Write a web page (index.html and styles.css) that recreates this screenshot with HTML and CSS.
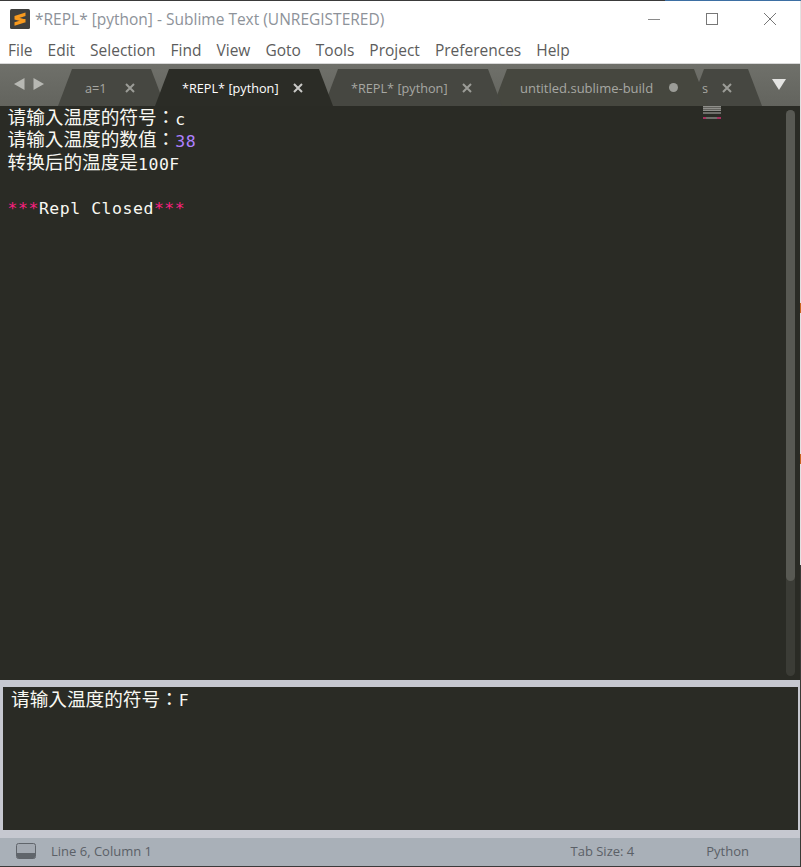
FILE: index.html
```html
<!DOCTYPE html>
<html lang="zh-TW">
<head>
<meta charset="utf-8">
<title>*REPL* [python] - Sublime Text (UNREGISTERED)</title>
<link rel="stylesheet" href="styles.css">
</head>
<body>
<div class="app">
  <div class="desk"><div class="desk-a"></div><div class="desk-b"></div></div>
  <div class="main">
    <header class="titlebar">
      <svg class="logo" width="20" height="20" viewBox="0 0 20 20"><rect width="20" height="20" rx="1.5" fill="#3f3f3d"/><path d="M4.5 7 15.5 3.6V7L4.5 10.4zM4.5 7.4l11 3V13.6l-11-3zM4.5 13.3l11-3.4v3.4L4.5 16.7z" fill="#f89a1e"/></svg>
      <div class="title">*REPL* [python] - Sublime Text (UNREGISTERED)</div>
      <div class="winctl">
        <svg width="14" height="14" viewBox="0 0 14 14"><path d="M1 7.5h12" stroke="#8a8a8a" fill="none"/></svg>
        <svg width="14" height="14" viewBox="0 0 14 14"><rect x="1.5" y="1.5" width="11" height="11" stroke="#777" fill="none"/></svg>
        <svg width="14" height="14" viewBox="0 0 14 14"><path d="M1 1l12 12M13 1 1 13" stroke="#777" fill="none"/></svg>
      </div>
    </header>
    <nav class="menubar">
      <span>File</span><span>Edit</span><span>Selection</span><span>Find</span><span>View</span><span>Goto</span><span>Tools</span><span>Project</span><span>Preferences</span><span>Help</span>
    </nav>
    <div class="tabbar">
      <div class="arrows">
        <svg width="11" height="12" viewBox="0 0 11 12"><path d="M10.5 0v12L0 6z" fill="#b7b8b3"/></svg>
        <svg width="11" height="12" viewBox="0 0 11 12"><path d="M.5 0v12L11 6z" fill="#b7b8b3"/></svg>
      </div>
      <div class="tab t1"><span class="label">a=1</span><svg class="x" width="10" height="10" viewBox="0 0 10 10"><path d="M1 1l8 8M9 1 1 9"/></svg></div>
      <div class="tab t2 active"><span class="label">*REPL* [python]</span><svg class="x" width="10" height="10" viewBox="0 0 10 10"><path d="M1 1l8 8M9 1 1 9"/></svg></div>
      <div class="tab t3"><span class="label">*REPL* [python]</span><svg class="x" width="10" height="10" viewBox="0 0 10 10"><path d="M1 1l8 8M9 1 1 9"/></svg></div>
      <div class="tab t4"><span class="label">untitled.sublime-build</span><i class="dot"></i></div>
      <div class="tab t5"><span class="label">s</span><svg class="x" width="10" height="10" viewBox="0 0 10 10"><path d="M1 1l8 8M9 1 1 9"/></svg></div>
      <svg class="more" width="14" height="11" viewBox="0 0 14 11"><path d="M0 0h14L7 11z" fill="#e4e4e2"/></svg>
    </div>
    <main class="editor">
      <div class="code">
        <div class="line"><span class="cjk">请输入温度的符号：</span>c</div>
        <div class="line"><span class="cjk">请输入温度的数值：</span><span class="num">38</span></div>
        <div class="line"><span class="cjk">转换后的温度是</span>100F</div>
        <div class="line">&nbsp;</div>
        <div class="line"><span class="pink">***</span>Repl Closed<span class="pink">***</span></div>
      </div>
      <div class="minimap"><i class="mm-a"></i><i class="mm-b"></i><i class="mm-c"></i></div>
      <div class="scrolltrack"><div class="thumb"></div></div>
    </main>
    <div class="sep"></div>
    <section class="panelwrap"><div class="panel"><span class="cjk panel-cjk">请输入温度的符号：</span>F</div></section>
    <footer class="status">
      <svg class="panelicon" width="20" height="16" viewBox="0 0 20 16"><rect x=".5" y=".5" width="19" height="15" rx="2" fill="#a3a9b1" stroke="#60656b"/><path d="M1 10h18v3.5a2 2 0 0 1-2 2H3a2 2 0 0 1-2-2z" fill="#60656b"/></svg>
      <span class="pos">Line 6, Column 1</span>
      <span class="tabsize">Tab Size: 4</span>
      <span class="syntax">Python</span>
    </footer>
  </div>
  <div class="rightedge"></div>
</div>
</body>
</html>
```
FILE: styles.css
```css
* { box-sizing: border-box; }
html, body { margin: 0; padding: 0; height: 100%; background: #33342f; overflow: hidden; }
body { font-family: "Open Sans", "Noto Sans", sans-serif; }
.app { width: 801px; height: 867px; display: grid; grid-template-columns: 800px 1px; grid-template-rows: 1px 866px; }
.desk { grid-column: 1 / 3; display: flex; }
.desk-a { width: 665px; background: #3a3a3a; }
.desk-b { flex: 1; background: #3d6fa3; }
.main { display: flex; flex-direction: column; min-width: 0; background: #fff; }
.rightedge { background: linear-gradient(#e2e2e2 0 302px, #c8641e 302px 312px, #e2e2e2 312px 453px, #c8641e 453px 463px, #e2e2e2 463px 564px, #3a3a36 564px); }

.titlebar { height: 31px; display: flex; align-items: center; padding-left: 10px; background: #fff; }
.logo { margin-top: 4px; flex: none; }
.title { margin-left: 5px; margin-top: 4px; font-size: 15.5px; color: #8d9299; white-space: nowrap; }
.winctl { margin-left: auto; margin-top: 4px; padding-right: 23px; display: flex; gap: 44px; }

.menubar { height: 31px; padding: 4px 0 0 8px; display: flex; gap: 15px; align-items: center; font-size: 15.5px; color: #5c5c5c; background: #fff; }

.tabbar { height: 43px; padding: 5px 0 0 14px; display: flex; align-items: stretch; background: linear-gradient(#6f706a, #63645e); border-top: 1px solid #d8d8d8; }
.arrows { width: 44px; flex: none; display: flex; gap: 8px; padding-top: 9px; align-items: flex-start; }
.tab { position: relative; isolation: isolate; flex: none; display: flex; align-items: center; padding: 0 30px 0 27px; justify-content: space-between; font-size: 12.7px; color: #a7a8a3; }
.tab::before { content: ""; position: absolute; inset: 0 16px 0 16px; background: #46473f; border-radius: 7px 7px 0 0; z-index: -1; }
.tab::after { content: ""; position: absolute; inset: 0; background: #46473f; clip-path: polygon(0 100%, 14px 0, calc(100% - 14px) 0, 100% 100%); z-index: -1; }
.label { white-space: nowrap; }
.x { flex: none; }
.x path { stroke: #9b9c97; stroke-width: 2; fill: none; }
.t1 { width: 107px; z-index: 1; }
.t2 { width: 178px; margin-left: -10px; z-index: 5; color: #fff; }
.t2::before, .t2::after { background: #2b2c26; }
.t2 .x path { stroke: #c9c9c6; }
.t3 { width: 178px; margin-left: -9px; z-index: 4; }
.t4 { width: 215px; margin-left: -9px; z-index: 3; font-size: 13px; }
.t5 { width: 72px; margin-left: -18px; z-index: 2; justify-content: flex-end; gap: 14px; }
.t1::before, .t1::after, .t3::before, .t3::after, .t5::before, .t5::after { background: #464741; }
.dot { width: 9px; height: 9px; border-radius: 50%; background: #9b9c97; flex: none; }
.more { margin-left: 10px; margin-top: 10px; flex: none; }

.editor { height: 574px; position: relative; background: #2a2b25; padding: 0 0 0 7.5px; }
.code { font-family: "DejaVu Sans Mono", monospace; font-size: 16.5px; letter-spacing: .52px; color: #f8f8f2; padding-top: 1.6px; }
.line { height: 22.6px; line-height: 22.6px; white-space: pre; }
.cjk { display: inline-block; vertical-align: 1px; font-family: "Noto Sans CJK TC", sans-serif; font-size: 18.65px; letter-spacing: 0; line-height: 16px; }
.panel-cjk { vertical-align: 0; }
.num { color: #ae81ff; }
.pink { color: #fb2080; }
.minimap { position: absolute; left: 703px; top: 0; width: 20px; display: flex; flex-direction: column; }
.minimap i { display: block; width: 18px; }
.mm-a { height: 5px; background: repeating-linear-gradient(#8f8f8a 0 1px, #63635e 1px 2px); }
.mm-b { height: 2px; margin-top: 1px; background: #6f6f6a; }
.mm-c { height: 2px; margin-top: 3px; background: linear-gradient(90deg, #a83060 0 3px, #6f6f6a 3px 14px, #a83060 14px); }
.scrolltrack { position: absolute; left: 786px; top: 4px; width: 9px; height: 566px; background: #3b3c36; border-radius: 5px; }
.thumb { height: 471px; background: #585953; border-radius: 5px; }

.sep { height: 7px; background: #c6c8d0; }
.panelwrap { height: 151px; background: #c6c8d0; padding: 0 2px 8px 3px; }
.panel { height: 143px; background: #2a2b25; color: #f8f8f2; padding: 3px 0 0 8px; font-family: "DejaVu Sans Mono", monospace; font-size: 16.5px; line-height: 22px; white-space: pre; }

.status { flex: 1; background: #a9b0b8; display: flex; align-items: center; font-size: 13px; color: #5b6067; padding: 0 0 2px 16px; border-bottom: 1px solid #3a3a3a; }
.panelicon { flex: none; }
.pos { margin-left: 15px; }
.tabsize { margin-left: auto; }
.syntax { margin-left: 72px; margin-right: 51px; }
```
